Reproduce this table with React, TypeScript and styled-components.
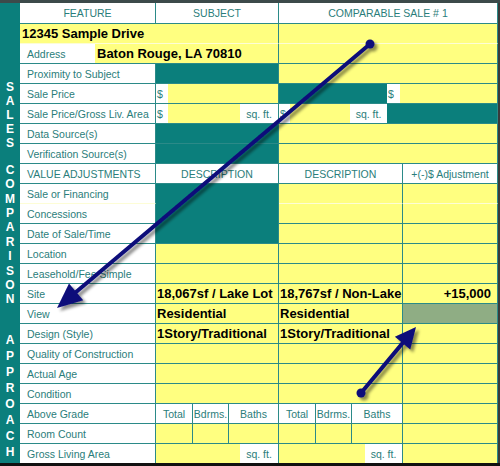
import React from 'react';
import styled, { createGlobalStyle } from 'styled-components';

const TEAL = '#0b7f7c';
const LINE = '#2b8a88';
const YELLOW = '#ffff80';
const LIGHTSEP = '#fdfdd6';
const LABEL = '#2a7d7a';
const GRAYGREEN = '#8fad84';

type Bg = 'white' | 'yellow' | 'teal' | 'gray';
const bgColor = (b: Bg) =>
  b === 'yellow' ? YELLOW : b === 'teal' ? TEAL : b === 'gray' ? GRAYGREEN : '#ffffff';

const Global = createGlobalStyle`
  html, body { margin: 0; padding: 0; background: #fff; }
  body { font-family: "Liberation Sans", Arial, sans-serif; }
`;

const Frame = styled.div`
  position: relative;
  width: 500px;
  height: 466px;
  box-sizing: border-box;
  display: flex;
  overflow: hidden;
  background: #fff;
  border-top: 3px solid #3c4a4a;
  border-bottom: 3px solid #111;
`;

const Strip = styled.div`
  width: 20px;
  flex: none;
  background: ${TEAL};
  display: flex;
  flex-direction: column;
  align-items: center;
  padding-top: 77px;
  box-sizing: border-box;
`;

const Letter = styled.div<{ $pitch: number }>`
  height: ${(p) => p.$pitch}px;
  line-height: ${(p) => p.$pitch}px;
  flex: none;
  color: #fff;
  font-weight: bold;
  font-size: 12px;
  text-align: center;
`;

const LetterGap = styled.div<{ $h: number }>`
  height: ${(p) => p.$h}px;
  flex: none;
`;

const Table = styled.div`
  width: 480px;
  flex: none;
  box-sizing: border-box;
  border-right: 2px solid #3a3a3a;
  display: flex;
  flex-direction: column;
`;

const Row = styled.div<{ $h?: number }>`
  display: grid;
  grid-template-columns: 136px 123px 124px 95px;
  height: ${(p) => p.$h ?? 20}px;
  flex: none;
`;

type Sep = 'line' | 'light' | 'none';

const Cell = styled.div<{
  $bg?: Bg;
  $span?: number;
  $sep?: Sep;
  $align?: 'left' | 'center' | 'right';
  $bold?: boolean;
  $pad?: number;
}>`
  grid-column: span ${(p) => p.$span ?? 1};
  box-sizing: border-box;
  background: ${(p) => bgColor(p.$bg ?? 'white')};
  border-right: 1px solid ${LINE};
  border-bottom: ${(p) =>
    p.$sep === 'none'
      ? '0'
      : `1px solid ${p.$sep === 'light' ? LIGHTSEP : LINE}`};
  display: flex;
  align-items: center;
  justify-content: ${(p) =>
    p.$align === 'center' ? 'center' : p.$align === 'right' ? 'flex-end' : 'flex-start'};
  padding: 0 ${(p) => p.$pad ?? 0}px;
  overflow: hidden;
  white-space: nowrap;
  font-size: ${(p) => (p.$bold ? '13px' : '10.5px')};
  font-weight: ${(p) => (p.$bold ? 'bold' : 'normal')};
  color: ${(p) => (p.$bold ? '#000' : LABEL)};
`;

const Split = styled.div`
  display: flex;
  align-items: stretch;
  height: 100%;
  width: 100%;
`;

const Part = styled.div<{ $w?: number; $bg?: Bg; $divider?: boolean; $align?: 'left' | 'center'; $pad?: number; $bold?: boolean }>`
  flex: ${(p) => (p.$w ? `0 0 ${p.$w}px` : '1 1 auto')};
  box-sizing: border-box;
  background: ${(p) => bgColor(p.$bg ?? 'white')};
  border-right: ${(p) => (p.$divider ? `1px solid ${LINE}` : '0')};
  display: flex;
  align-items: center;
  justify-content: ${(p) => (p.$align === 'center' ? 'center' : 'flex-start')};
  padding-left: ${(p) => p.$pad ?? 0}px;
  font-size: ${(p) => (p.$bold ? '13px' : '10.5px')};
  font-weight: ${(p) => (p.$bold ? 'bold' : 'normal')};
  color: ${(p) => (p.$bold ? '#000' : LABEL)};
  white-space: nowrap;
  overflow: hidden;
`;

const Overlay = styled.svg`
  position: absolute;
  left: 0;
  top: -3px;
  width: 500px;
  height: 466px;
  pointer-events: none;
`;

const Label: React.FC<{ text: string; sep?: Sep }> = ({ text, sep }) => (
  <Cell $pad={7} $sep={sep}>
    {text}
  </Cell>
);

function arrowHead(x0: number, y0: number, tx: number, ty: number, len: number, half: number) {
  const dx = tx - x0;
  const dy = ty - y0;
  const L = Math.hypot(dx, dy);
  const ux = dx / L;
  const uy = dy / L;
  const bx = tx - ux * len;
  const by = ty - uy * len;
  const nx = -uy;
  const ny = ux;
  return {
    base: { x: bx + ux * 2, y: by + uy * 2 },
    points: `${tx},${ty} ${bx + nx * half},${by + ny * half} ${bx - nx * half},${by - ny * half}`,
  };
}

const Arrow: React.FC<{ x0: number; y0: number; tx: number; ty: number; len: number; half: number }> = ({
  x0,
  y0,
  tx,
  ty,
  len,
  half,
}) => {
  const h = arrowHead(x0, y0, tx, ty, len, half);
  return (
    <g filter="url(#shadow)">
      <line x1={x0} y1={y0} x2={h.base.x} y2={h.base.y} stroke="#0d0d7a" strokeWidth={4} strokeLinecap="round" />
      <polygon points={h.points} fill="#0d0d7a" />
      <circle cx={x0} cy={y0} r={4.5} fill="#0d0d7a" />
    </g>
  );
};

const word = (w: string, pitch: number) =>
  w.split('').map((c, i) => (
    <Letter key={w + i} $pitch={pitch}>
      {c}
    </Letter>
  ));

export default function App() {
  return (
    <>
      <Global />
      <Frame>
        <Strip>
          {word('SALES', 14)}
          <LetterGap $h={12.8} />
          {word('COMPARISON', 14.4)}
          <LetterGap $h={25.2} />
          {word('APPROACH:', 16)}
        </Strip>
        <Table>
          <Row $h={21}>
            <Cell $align="center">FEATURE</Cell>
            <Cell $align="center">SUBJECT</Cell>
            <Cell $align="center" $span={2}>COMPARABLE SALE # 1</Cell>
          </Row>

          <Row>
            <Cell $span={2} $bg="yellow" $bold $pad={2} $sep="light">12345 Sample Drive</Cell>
            <Cell $span={2} $bg="yellow" $sep="light" />
          </Row>

          <Row>
            <Cell $span={2}>
              <Split>
                <Part $w={75} $pad={7}>Address</Part>
                <Part $bg="yellow" $bold $pad={2}>Baton Rouge, LA 70810</Part>
              </Split>
            </Cell>
            <Cell $span={2} $bg="yellow" />
          </Row>

          <Row>
            <Label text="Proximity to Subject" />
            <Cell $bg="teal" />
            <Cell $span={2} $bg="yellow" />
          </Row>

          <Row>
            <Label text="Sale Price" />
            <Cell>
              <Split>
                <Part $w={12} $pad={1}>$</Part>
                <Part $bg="yellow" />
              </Split>
            </Cell>
            <Cell $span={2}>
              <Split>
                <Part $w={108} $bg="teal" />
                <Part $w={13} $pad={1}>$</Part>
                <Part $bg="yellow" />
              </Split>
            </Cell>
          </Row>

          <Row>
            <Label text="Sale Price/Gross Liv. Area" />
            <Cell>
              <Split>
                <Part $w={12} $pad={1}>$</Part>
                <Part $w={72} $bg="yellow" />
                <Part $align="center">sq. ft.</Part>
              </Split>
            </Cell>
            <Cell $span={2}>
              <Split>
                <Part $w={11} $pad={1}>$</Part>
                <Part $w={60} $bg="yellow" />
                <Part $w={37} $align="center">sq. ft.</Part>
                <Part $bg="teal" />
              </Split>
            </Cell>
          </Row>

          <Row>
            <Label text="Data Source(s)" />
            <Cell $bg="teal" />
            <Cell $span={2} $bg="yellow" />
          </Row>

          <Row>
            <Label text="Verification Source(s)" />
            <Cell $bg="teal" />
            <Cell $span={2} $bg="yellow" />
          </Row>

          <Row>
            <Label text="VALUE ADJUSTMENTS" />
            <Cell $align="center">DESCRIPTION</Cell>
            <Cell $align="center">DESCRIPTION</Cell>
            <Cell $align="center">+(-)$ Adjustment</Cell>
          </Row>

          <Row>
            <Label text="Sale or Financing" sep="light" />
            <Cell $bg="teal" $sep="none" />
            <Cell $bg="yellow" $sep="light" />
            <Cell $bg="yellow" $sep="light" />
          </Row>

          <Row>
            <Label text="Concessions" />
            <Cell $bg="teal" $sep="none" />
            <Cell $bg="yellow" />
            <Cell $bg="yellow" />
          </Row>

          <Row>
            <Label text="Date of Sale/Time" />
            <Cell $bg="teal" />
            <Cell $bg="yellow" />
            <Cell $bg="yellow" />
          </Row>

          {['Location', 'Leasehold/Fee Simple'].map((t) => (
            <Row key={t}>
              <Label text={t} />
              <Cell $bg="yellow" />
              <Cell $bg="yellow" />
              <Cell $bg="yellow" />
            </Row>
          ))}

          <Row>
            <Label text="Site" />
            <Cell $bg="yellow" $bold $pad={1}>18,067sf / Lake Lot</Cell>
            <Cell $bg="yellow" $bold $pad={1}>18,767sf / Non-Lake</Cell>
            <Cell $bg="yellow" $bold $align="right" $pad={6}>+15,000</Cell>
          </Row>

          <Row>
            <Label text="View" />
            <Cell $bg="yellow" $bold $pad={1}>Residential</Cell>
            <Cell $bg="yellow" $bold $pad={1}>Residential</Cell>
            <Cell $bg="gray" />
          </Row>

          <Row>
            <Label text="Design (Style)" />
            <Cell $bg="yellow" $bold $pad={1}>1Story/Traditional</Cell>
            <Cell $bg="yellow" $bold $pad={1}>1Story/Traditional</Cell>
            <Cell $bg="yellow" />
          </Row>

          {['Quality of Construction', 'Actual Age', 'Condition'].map((t) => (
            <Row key={t}>
              <Label text={t} />
              <Cell $bg="yellow" />
              <Cell $bg="yellow" />
              <Cell $bg="yellow" />
            </Row>
          ))}

          <Row>
            <Label text="Above Grade" />
            <Cell>
              <Split>
                <Part $w={37} $divider $align="center">Total</Part>
                <Part $w={36} $divider $align="center">Bdrms.</Part>
                <Part $align="center">Baths</Part>
              </Split>
            </Cell>
            <Cell>
              <Split>
                <Part $w={37} $divider $align="center">Total</Part>
                <Part $w={36} $divider $align="center">Bdrms.</Part>
                <Part $align="center">Baths</Part>
              </Split>
            </Cell>
            <Cell $bg="yellow" />
          </Row>

          <Row>
            <Label text="Room Count" />
            <Cell>
              <Split>
                <Part $w={37} $divider $bg="yellow" />
                <Part $w={36} $divider $bg="yellow" />
                <Part $bg="yellow" />
              </Split>
            </Cell>
            <Cell>
              <Split>
                <Part $w={37} $divider $bg="yellow" />
                <Part $w={36} $divider $bg="yellow" />
                <Part $bg="yellow" />
              </Split>
            </Cell>
            <Cell $bg="yellow" />
          </Row>

          <Row $h={19}>
            <Label text="Gross Living Area" sep="none" />
            <Cell $sep="none">
              <Split>
                <Part $w={84} $bg="yellow" />
                <Part $align="center">sq. ft.</Part>
              </Split>
            </Cell>
            <Cell $sep="none">
              <Split>
                <Part $w={86} $bg="yellow" />
                <Part $align="center">sq. ft.</Part>
              </Split>
            </Cell>
            <Cell $bg="yellow" $sep="none" />
          </Row>
        </Table>
        <Overlay viewBox="0 0 500 466">
          <defs>
            <filter id="shadow" x="-20%" y="-20%" width="140%" height="140%">
              <feDropShadow dx="3" dy="3" stdDeviation="1.6" floodColor="#000" floodOpacity="0.45" />
            </filter>
          </defs>
          <Arrow x0={370} y0={44} tx={57} ty={308} len={25} half={11} />
          <Arrow x0={361} y0={393} tx={416} ty={327} len={21} half={10} />
        </Overlay>
      </Frame>
    </>
  );
}
